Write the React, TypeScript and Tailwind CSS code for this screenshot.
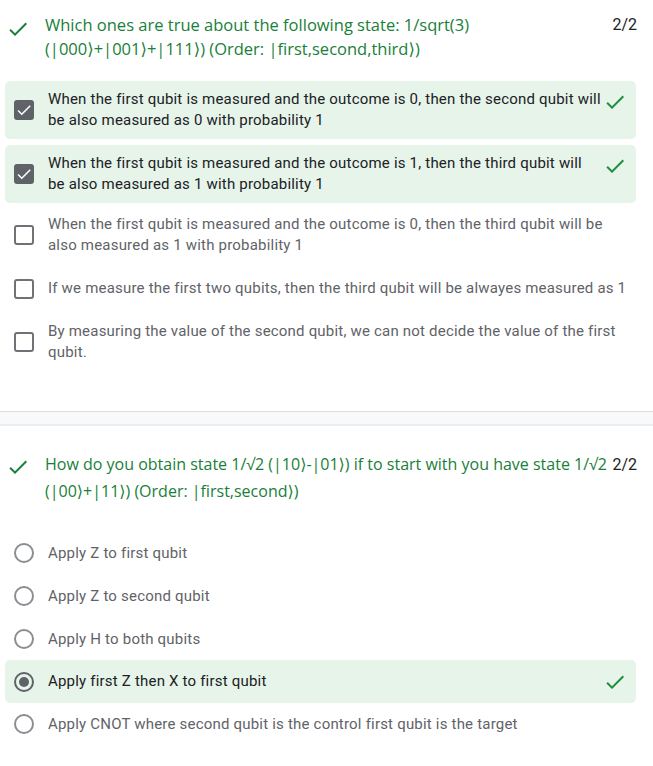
import React from 'react';

type CheckOpt = { text: string; checked: boolean; correct?: boolean };
type RadioOpt = { text: string; selected: boolean; correct?: boolean };

const font = { fontFamily: 'Roboto, "Liberation Sans", Arial, sans-serif' };
const titleFont = { fontFamily: '"Open Sans", Roboto, "DejaVu Sans", sans-serif' };

function GreenCheck({ className }: { className?: string }) {
  return (
    <svg viewBox="0 0 24 24" className={className} fill="currentColor">
      <path d="M9 16.17L4.83 12l-1.42 1.41L9 19 21 7l-1.41-1.41z" />
    </svg>
  );
}

function CheckBox({ checked }: { checked: boolean }) {
  if (checked) {
    return (
      <div className="w-5 h-5 rounded-[3px] bg-[#5f6368] flex items-center justify-center shrink-0">
        <svg viewBox="0 0 24 24" className="w-[18px] h-[18px] text-white" fill="currentColor">
          <path d="M9 16.17L4.83 12l-1.42 1.41L9 19 21 7l-1.41-1.41z" />
        </svg>
      </div>
    );
  }
  return <div className="w-5 h-5 rounded-[3px] border-2 border-[#6f7377] shrink-0" />;
}

function Radio({ selected }: { selected: boolean }) {
  return (
    <div
      className={`w-5 h-5 rounded-full border-2 shrink-0 flex items-center justify-center ${
        selected ? 'border-[#5f6368]' : 'border-[#8a8e92]'
      }`}
    >
      {selected && <div className="w-[10px] h-[10px] rounded-full bg-[#5f6368]" />}
    </div>
  );
}

function Title({ text, size, leading }: { text: string; size: string; leading: string }) {
  return (
    <div className="flex items-start pl-[6px] pr-4">
      <GreenCheck className="w-6 h-6 text-[#188038] shrink-0 mt-[4px]" />
      <div className={`flex-1 pl-[15px] text-[#188038] ${size} ${leading}`} style={titleFont}>
        {text}
      </div>
      <div className={`text-[16px] text-[#202124] ${leading}`}>2/2</div>
    </div>
  );
}

const checks: CheckOpt[] = [
  {
    text: 'When the first qubit is measured and the outcome is 0, then the second qubit will be also measured as 0 with probability 1',
    checked: true,
    correct: true,
  },
  {
    text: 'When the first qubit is measured and the outcome is 1, then the third qubit will be also measured as 1 with probability 1',
    checked: true,
    correct: true,
  },
  {
    text: 'When the first qubit is measured and the outcome is 0, then the third qubit will be also measured as 1 with probability 1',
    checked: false,
  },
  {
    text: 'If we measure the first two qubits, then the third qubit will be alwayes measured as 1',
    checked: false,
  },
  {
    text: 'By measuring the value of the second qubit, we can not decide the value of the first qubit.',
    checked: false,
  },
];

const radios: RadioOpt[] = [
  { text: 'Apply Z to first qubit', selected: false },
  { text: 'Apply Z to second qubit', selected: false },
  { text: 'Apply H to both qubits', selected: false },
  { text: 'Apply first Z then X to first qubit', selected: true, correct: true },
  { text: 'Apply CNOT where second qubit is the control first qubit is the target', selected: false },
];

export default function App() {
  return (
    <div className="w-[653px] h-[766px] bg-white overflow-hidden" style={font}>
      {/* Card 1: checkbox question */}
      <div className="pt-[13px] pb-10">
        <Title
          text="Which ones are true about the following state: 1/sqrt(3) (|000⟩+|001⟩+|111⟩) (Order: |first,second,third⟩)"
          size="text-[16.5px]"
          leading="leading-6"
        />
        <div className="mt-[20px] ml-[5px] mr-[17px] flex flex-col gap-[6px]">
          {checks.map((o, i) => (
            <div
              key={i}
              className={`flex items-start rounded-[5px] py-2 pl-[9px] pr-[9px] ${
                o.checked ? 'bg-[#e6f4ea]' : ''
              } ${i === 2 ? '-mt-[3px]' : ''}`}
            >
              <div className="self-center">
                <CheckBox checked={o.checked} />
              </div>
              <div
                className={`flex-1 pl-[14px] text-[15px] leading-[21px] tracking-[0.2px] ${
                  o.checked ? 'text-[#202124]' : 'text-[#5f6368]'
                }`}
              >
                {o.text}
              </div>
              {o.correct && <GreenCheck className="w-6 h-6 text-[#1e8e3e] shrink-0 ml-[2px] mt-[1px]" />}
            </div>
          ))}
        </div>
      </div>

      {/* Divider between cards */}
      <div className="h-[15px] bg-[#f8f9fa] border-t border-[#dadce0] border-b-2 border-b-[#ebedef]" />

      {/* Card 2: radio question */}
      <div className="pt-[25px]">
        <Title
          text="How do you obtain state 1/√2 (|10⟩-|01⟩) if to start with you have state 1/√2 (|00⟩+|11⟩) (Order: |first,second⟩)"
          size="text-[16px]"
          leading="leading-[27px]"
        />
        <div className="mt-[27px] ml-[5px] mr-[17px] flex flex-col">
          {radios.map((o, i) => (
            <div
              key={i}
              className={`h-[42.75px] flex items-center rounded-[5px] pl-[9px] pr-[9px] ${
                o.selected ? 'bg-[#e6f4ea]' : ''
              }`}
            >
              <Radio selected={o.selected} />
              <div
                className={`flex-1 pl-[14px] text-[15px] tracking-[0.2px] ${
                  o.selected ? 'text-[#202124]' : 'text-[#5f6368]'
                }`}
              >
                {o.text}
              </div>
              {o.correct && <GreenCheck className="w-6 h-6 text-[#1e8e3e] shrink-0" />}
            </div>
          ))}
        </div>
      </div>
    </div>
  );
}
